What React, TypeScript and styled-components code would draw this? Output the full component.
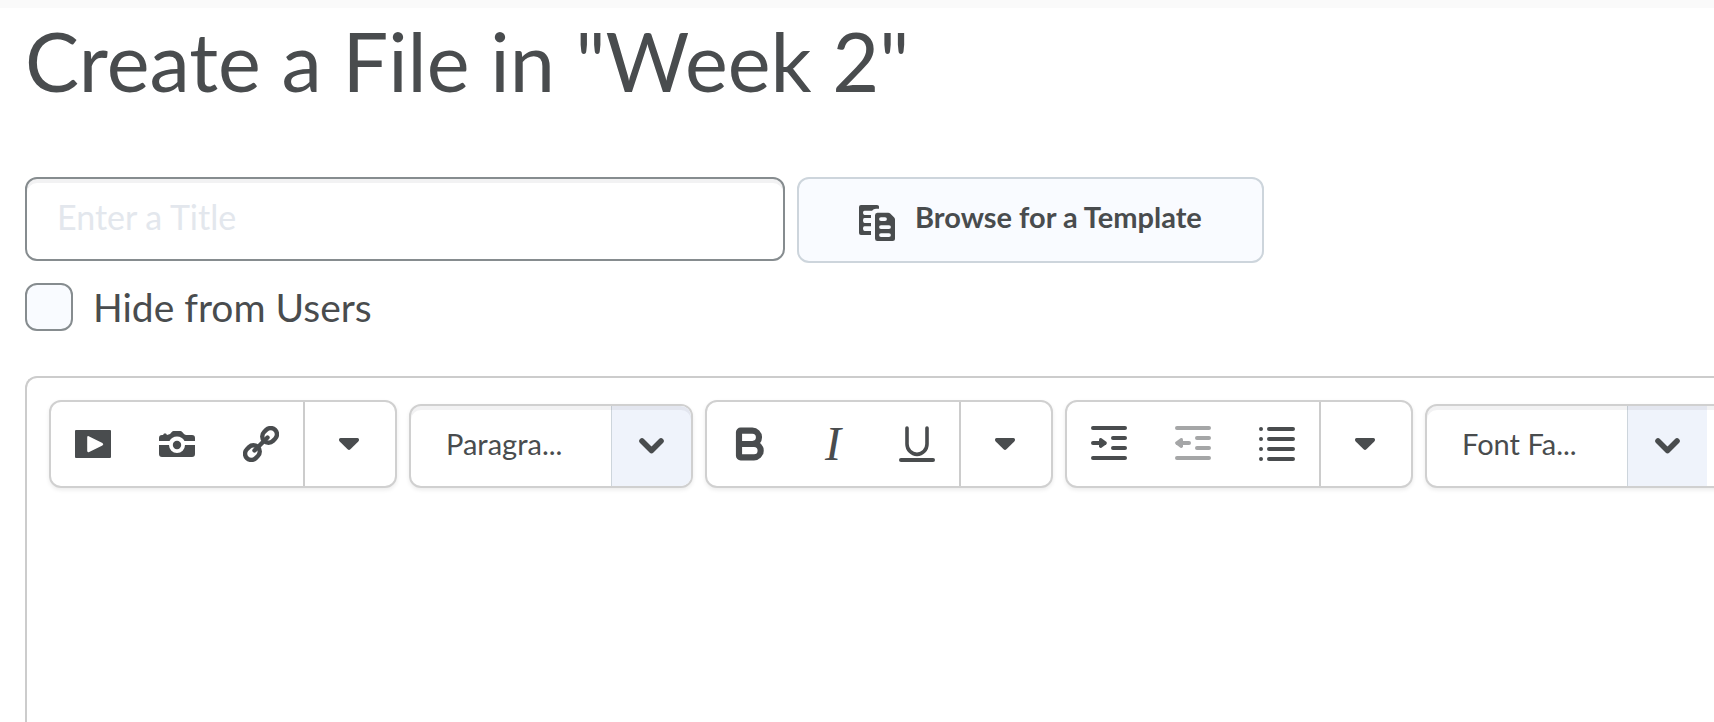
import React from 'react';
import styled, { createGlobalStyle } from 'styled-components';
import { Bold } from 'lucide-react';

const ink = '#494c4e';
const line = '#d0d0d0';

const GlobalStyle = createGlobalStyle`
  *, *::before, *::after { box-sizing: border-box; }
  body {
    margin: 0;
    background: #fff;
    color: ${ink};
    font-family: Lato, "Liberation Sans", sans-serif;
    overflow: hidden;
  }
`;

const Page = styled.main`
  display: flex;
  flex-direction: column;
  min-height: 100vh;
  padding: 5px 0 0 25px;
  border-top: 8px solid #fafafa;
`;

const Title = styled.h1`
  margin: 0 0 68px;
  font-size: 81px;
  font-weight: 400;
  line-height: 96px;
`;

const FormRow = styled.div`
  display: flex;
  align-items: flex-start;
  gap: 12px;
  margin-bottom: 20px;
`;

const TitleInput = styled.input`
  width: 760px;
  min-width: 0;
  height: 84px;
  padding: 0 30px 6px;
  border: 2px solid #868c8f;
  border-radius: 12px;
  background: #fff;
  box-shadow: inset 0 4px 0 #f2f2f3;
  color: ${ink};
  font: 400 34px/40px Lato, "Liberation Sans", sans-serif;

  &::placeholder {
    color: #e3e7ed;
    opacity: 1;
  }
`;

const TemplateButton = styled.button`
  display: flex;
  flex: none;
  align-items: center;
  gap: 20px;
  height: 86px;
  padding: 0 60px 6px;
  border: 2px solid #cdd5dc;
  border-radius: 12px;
  background: #f9fbff;
  color: ${ink};
  font: 700 29px/36px Lato, "Liberation Sans", sans-serif;
  cursor: pointer;

  svg { margin-top: 12px; }
`;

const CheckLabel = styled.label`
  display: flex;
  align-items: center;
  align-self: flex-start;
  gap: 20px;
  margin-bottom: 45px;
  font-size: 39px;
  line-height: 48px;
`;

const Checkbox = styled.input`
  appearance: none;
  width: 48px;
  height: 48px;
  margin: 0;
  border: 2px solid #868c8f;
  border-radius: 12px;
  background: #f9fbff;

  &:checked { background: #006fbf; }
`;

const Editor = styled.section`
  display: flex;
  flex: 1;
  flex-direction: column;
  border: 2px solid #ccc;
  border-width: 2px 0 0 2px;
  border-top-left-radius: 12px;
`;

const Toolbar = styled.div`
  display: flex;
  align-items: flex-end;
  gap: 12px;
  padding: 22px 0 22px 22px;
  overflow: hidden;
`;

const Group = styled.div`
  display: flex;
  flex: none;
  height: 88px;
  border: 2px solid ${line};
  border-radius: 12px;
  background: #fff;
  box-shadow: 0 2px 4px rgba(0, 0, 0, 0.08);
`;

const ToolButton = styled.button`
  display: flex;
  align-items: center;
  justify-content: center;
  width: 84px;
  padding: 0;
  border: 0;
  background: none;
  color: ${ink};
  cursor: pointer;

  &:disabled { color: #a5a6a7; cursor: default; }
`;

const MoreButton = styled(ToolButton)`
  width: 92px;
  padding-right: 2px;
  border-left: 2px solid #ccc;
`;

const ItalicMark = styled.span`
  font: italic 400 48px/48px "Liberation Serif", serif;
`;

const SelectBox = styled.div<{ $wide?: boolean }>`
  position: relative;
  display: flex;
  flex: none;
  width: ${(p) => (p.$wide ? 330 : 284)}px;
  height: 84px;
  border: 2px solid ${line};
  border-radius: 12px;
  background: #fff;
  box-shadow: 0 2px 4px rgba(0, 0, 0, 0.08);
  overflow: hidden;

  &::after {
    content: '';
    position: absolute;
    inset: 0;
    border-radius: 10px;
    box-shadow: inset 0 4px 0 rgba(73, 76, 78, 0.07);
    pointer-events: none;
  }
`;

const Select = styled.select`
  appearance: none;
  width: 200px;
  padding: 0 0 4px 35px;
  border: 0;
  background: none;
  color: ${ink};
  font: 400 29px/36px Lato, "Liberation Sans", sans-serif;
`;

const SelectArrow = styled.span`
  display: flex;
  align-items: center;
  justify-content: center;
  width: 80px;
  border-left: 1px solid #cdd5dc;
  background: #eff3fb;
  pointer-events: none;
`;

const Canvas = styled.div`
  flex: 1;
  outline: none;
`;

const Icon = ({ children }: { children: React.ReactNode }) => (
  <svg width="36" height="36" viewBox="0 0 36 36" fill="none" aria-hidden="true">
    {children}
  </svg>
);

const Strokes = ({ d }: { d: string }) => (
  <path d={d} stroke="currentColor" strokeWidth="4" strokeLinecap="round" strokeLinejoin="round" />
);

const TemplateIcon = () => (
  <Icon>
    <path
      fill="currentColor"
      d="M2 0H18Q20 0 20 1.600V3.700H17Q14.500 3.700 13 5.700H5.500Q4 5.700 4 7.800T5.500 9.900H12V13.100H5.500Q4 13.100 4 15.500T5.500 18H12V21.300H5.500Q4 21.300 4 23.500T5.500 26H12V30H2Q0 30 0 28V2Q0 0 2 0Z"
    />
    <path
      fill="currentColor"
      fillRule="evenodd"
      d="M18.400 7.800H29.200Q30.400 7.800 31.200 8.600L35.200 12.600Q36 13.400 36 14.500V33.500Q36 36 33.500 36H18.400Q16 36 16 33.500V10.300Q16 7.800 18.400 7.800ZM22 12.200A1.900 1.900 0 0 0 22 16H26A1.900 1.900 0 0 0 26 12.200ZM22 20.200A1.900 1.900 0 0 0 22 24H30A1.900 1.900 0 0 0 30 20.200ZM22 28.200A1.900 1.900 0 0 0 22 32H30A1.900 1.900 0 0 0 30 28.200Z"
    />
  </Icon>
);

const PlayIcon = () => (
  <Icon>
    <path
      fill="currentColor"
      fillRule="evenodd"
      d="M1 4H35Q36 4 36 5V31Q36 32 35 32H1Q0 32 0 31V5Q0 4 1 4ZM12.200 11.500V24.700Q12.200 26.800 14.200 25.900L27.400 19.400Q29.200 18.200 27.400 17L14.200 10.400Q12.200 9.500 12.200 11.500Z"
    />
  </Icon>
);

const CameraIcon = () => (
  <Icon>
    <path
      fill="currentColor"
      d="M0 15V12Q0 9 3 9H4L5 7.500H7L8 9L11 8L13 5.800Q13.600 5 14.600 5H21.400Q22.400 5 23 5.800L25 8Q26 9 27.500 9H33Q36 9 36 12V15H25.500A8.500 8.500 0 0 0 10.500 15Z"
    />
    <path fill="currentColor" d="M0 19H10A8 8 0 0 0 26 19H36V28Q36 31 33 31H3Q0 31 0 28Z" />
    <circle cx="18" cy="19" r="4.200" fill="currentColor" />
  </Icon>
);

const LinkIcon = () => (
  <Icon>
    <g stroke="currentColor" strokeWidth="4.400" strokeLinecap="round">
      <rect x="-7.800" y="-6.300" width="15.600" height="12.600" rx="6.300" transform="translate(26.600 9.400) rotate(-45)" />
      <rect x="-7.800" y="-6.300" width="15.600" height="12.600" rx="6.300" transform="translate(9.400 26.600) rotate(-45)" />
      <path d="M11.500 24.500L24.500 11.500" />
    </g>
  </Icon>
);

const UnderlineIcon = () => (
  <Icon>
    <path
      d="M8 2V18A10 10.400 0 0 0 28 18V2"
      stroke="currentColor"
      strokeWidth="3.600"
      strokeLinecap="round"
    />
    <Strokes d="M2 34H34" />
  </Icon>
);

const IndentIcon = () => (
  <Icon>
    <Strokes d="M2 2H34M22 12H34M22 22H34M2 32H34M2 17H10" />
    <path fill="currentColor" d="M8 13.500Q8.500 11.500 10.500 12.200L15.300 15.800Q16.600 17 15.300 18.200L10.500 21.800Q8.500 22.500 8 20.500Z" />
  </Icon>
);

const OutdentIcon = () => (
  <Icon>
    <Strokes d="M2 2H34M22 12H34M22 22H34M2 32H34M6 17H14" />
    <path fill="currentColor" d="M8 13.500Q7.500 11.500 5.500 12.200L.7 15.800Q-.6 17 .7 18.200L5.500 21.800Q7.500 22.500 8 20.500Z" />
  </Icon>
);

const ListIcon = () => (
  <Icon>
    <Strokes d="M10 3H34M10 13H34M10 23H34M10 33H34M2 3H2.010M2 13H2.010M2 23H2.010M2 33H2.010" />
  </Icon>
);

const CaretIcon = () => (
  <svg width="20" height="12" viewBox="0 0 20 12" aria-hidden="true">
    <path fill="currentColor" d="M1.500 0H18.500Q20 0 20 1.500V2Q20 2.800 19.300 3.500L11.400 11.300Q10 12.600 8.600 11.300L.7 3.500Q0 2.800 0 2V1.500Q0 0 1.500 0Z" />
  </svg>
);

const ChevronIcon = () => (
  <svg width="25" height="16" viewBox="0 0 25 16" fill="none" aria-hidden="true">
    <path d="M3 3L12.500 12.500L22 3" stroke="currentColor" strokeWidth="5.600" strokeLinecap="round" strokeLinejoin="round" />
  </svg>
);

const More = ({ label }: { label: string }) => (
  <MoreButton type="button" aria-label={label}>
    <CaretIcon />
  </MoreButton>
);

const Dropdown = ({ label, value, wide }: { label: string; value: string; wide?: boolean }) => (
  <SelectBox $wide={wide}>
    <Select aria-label={label}>
      <option>{value}</option>
    </Select>
    <SelectArrow>
      <ChevronIcon />
    </SelectArrow>
  </SelectBox>
);

export default function App() {
  return (
    <>
      <GlobalStyle />
      <Page>
        <Title>Create a File in "Week 2"</Title>
        <FormRow>
          <TitleInput type="text" aria-label="Title" placeholder="Enter a Title" />
          <TemplateButton type="button">
            <TemplateIcon />
            Browse for a Template
          </TemplateButton>
        </FormRow>
        <CheckLabel>
          <Checkbox type="checkbox" />
          Hide from Users
        </CheckLabel>
        <Editor>
          <Toolbar role="toolbar">
            <Group>
              <ToolButton type="button" aria-label="Insert stuff"><PlayIcon /></ToolButton>
              <ToolButton type="button" aria-label="Insert image"><CameraIcon /></ToolButton>
              <ToolButton type="button" aria-label="Insert link"><LinkIcon /></ToolButton>
              <More label="More insert options" />
            </Group>
            <Dropdown label="Format" value="Paragra..." />
            <Group>
              <ToolButton type="button" aria-label="Bold"><Bold size={40} strokeWidth={3.7} /></ToolButton>
              <ToolButton type="button" aria-label="Italic"><ItalicMark>I</ItalicMark></ToolButton>
              <ToolButton type="button" aria-label="Underline"><UnderlineIcon /></ToolButton>
              <More label="More text options" />
            </Group>
            <Group>
              <ToolButton type="button" aria-label="Indent"><IndentIcon /></ToolButton>
              <ToolButton type="button" aria-label="Outdent" disabled><OutdentIcon /></ToolButton>
              <ToolButton type="button" aria-label="Unordered list"><ListIcon /></ToolButton>
              <More label="More paragraph options" />
            </Group>
            <Dropdown label="Font family" value="Font Fa..." wide />
          </Toolbar>
          <Canvas contentEditable suppressContentEditableWarning role="textbox" aria-label="Content" />
        </Editor>
      </Page>
    </>
  );
}
